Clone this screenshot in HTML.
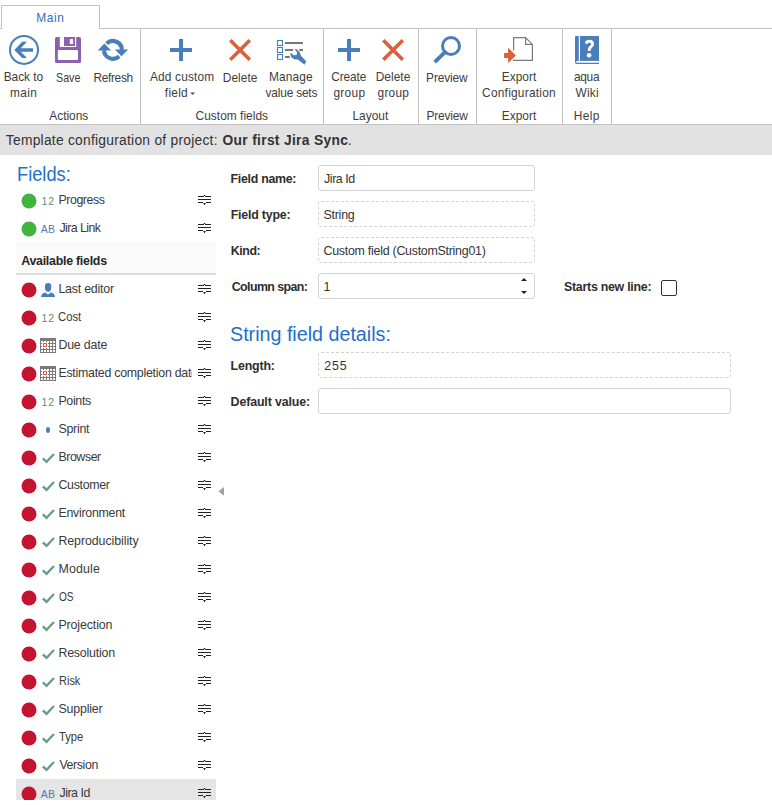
<!DOCTYPE html>
<html><head><meta charset="utf-8"><style>
html,body{margin:0;padding:0;}
body{width:772px;height:805px;overflow:hidden;background:#fff;position:relative;font-family:"Liberation Sans",sans-serif;}
.t{position:absolute;white-space:nowrap;line-height:1;}
</style></head><body>
<div style="position:absolute;left:0px;top:28px;width:772px;height:1px;background:#c2c2c2;"></div>
<div style="position:absolute;left:1px;top:5px;width:99px;height:24px;background:#fff;box-sizing:border-box;border:1px solid #c2c2c2;border-bottom:none;"></div>
<div style="position:absolute;left:140px;top:29px;width:1px;height:95px;background:#c2c2c2;"></div>
<div style="position:absolute;left:323px;top:29px;width:1px;height:95px;background:#c2c2c2;"></div>
<div style="position:absolute;left:418px;top:29px;width:1px;height:95px;background:#c2c2c2;"></div>
<div style="position:absolute;left:476px;top:29px;width:1px;height:95px;background:#c2c2c2;"></div>
<div style="position:absolute;left:562px;top:29px;width:1px;height:95px;background:#c2c2c2;"></div>
<div style="position:absolute;left:611px;top:29px;width:1px;height:95px;background:#c2c2c2;"></div>
<div style="position:absolute;left:0px;top:124px;width:772px;height:1px;background:#c2c2c2;"></div>
<div style="position:absolute;left:0px;top:125px;width:772px;height:30px;background:#e2e2e2;"></div>
<svg style="position:absolute;left:0;top:0" width="772" height="124" viewBox="0 0 772 124">
<!-- back -->
<circle cx="24" cy="49.9" r="14" fill="none" stroke="#4a7ebb" stroke-width="2"/>
<polygon fill="#4a7ebb" points="14.3,50 22.2,41.8 27,41.8 20.8,48.3 33,48.3 33,51.7 20.8,51.7 27,58 22.2,58"/>
<!-- save -->
<path fill="#8c60ae" fill-rule="evenodd" d="M56.5,37 H59.8 V47 H76.2 V37 H79.5 Q81,37 81,38.5 V61.5 Q81,63 79.5,63 H56.5 Q55,63 55,61.5 V38.5 Q55,37 56.5,37 Z M58.8,50 Q57.8,50 57.8,51 V59 Q57.8,60 58.8,60 H77 Q78,60 78,59 V51 Q78,50 77,50 Z"/>
<path fill="#8c60ae" fill-rule="evenodd" d="M64,37 H75 V46 H64 Z M69.8,39 V44 H73.1 V39 Z"/>
<!-- refresh -->
<path fill="none" stroke="#4a7ebb" stroke-width="4.1" d="M106.61,43.61 A8.9,8.9 0 0 1 121.79,50.21"/>
<polygon fill="#4a7ebb" points="114.8,49.4 128.2,49.4 121.5,56.3"/>
<path fill="none" stroke="#4a7ebb" stroke-width="4.1" d="M104.01,50.21 A8.9,8.9 0 0 0 119.19,56.19"/>
<polygon fill="#4a7ebb" points="97.7,50.5 111.1,50.5 104.4,43.6"/>
<!-- add custom field plus -->
<rect x="179" y="39" width="4" height="22" fill="#4a7ebb"/>
<rect x="170" y="48" width="22" height="4" fill="#4a7ebb"/>
<!-- delete X -->
<path stroke="#d9603b" stroke-width="3.6" d="M230.3,40.2 L249.8,59.8 M249.8,40.2 L230.3,59.8"/>
<!-- manage value sets -->
<g fill="none" stroke="#4a7ebb" stroke-width="1.1">
<rect x="277.5" y="40.5" width="5" height="5"/><rect x="277.5" y="47.5" width="5" height="5"/><rect x="277.5" y="54.5" width="5" height="5"/>
</g>
<g fill="#777"><rect x="285" y="42" width="18" height="2"/><rect x="285" y="49" width="8" height="2"/><rect x="299.3" y="49" width="3.7" height="2"/><rect x="285" y="56" width="4.8" height="2"/></g>
<path fill="#4a7ebb" d="M294.4,49 L296.8,49.2 L299.7,52.2 L300.9,55.8 L306.2,61.2 L304.6,64.8 L297.6,59.6 L294.2,59.2 L291.5,57.5 L290.1,53.4 L291,53 L293.5,55.2 L296.6,55 L297.2,52.4 Z"/>
<!-- create group plus -->
<rect x="347" y="39" width="4" height="22" fill="#4a7ebb"/>
<rect x="338" y="48" width="22" height="4" fill="#4a7ebb"/>
<!-- delete group X -->
<path stroke="#d9603b" stroke-width="3.6" d="M383.3,40.2 L402.8,59.8 M402.8,40.2 L383.3,59.8"/>
<!-- preview -->
<circle cx="451" cy="46" r="8.5" fill="none" stroke="#4a7ebb" stroke-width="3"/>
<path stroke="#4a7ebb" stroke-width="3.8" d="M446.3,50.8 L434.7,62.1"/>
<!-- export -->
<path fill="none" stroke="#7a7a7a" stroke-width="1.2" d="M513.6,50.6 V37.6 H525.6 L532.4,44.4 V60.3 H513.6 V59.5 M525.6,37.6 V44.4 H532.4"/>
<polygon fill="#d9603b" points="504.1,53 508.1,53 508.1,47.8 515.9,55.5 508.1,63.1 508.1,57.9 504.1,57.9"/>
<!-- help book -->
<path fill="#4a7ebb" d="M576,36 H578.8 V60.9 H577 Q576.2,60.9 576.2,61.8 Q576.2,62.8 577,62.8 H599 V64 H576.8 Q575,64 575,62 V37 Q575,36 576,36 Z"/>
<rect x="580" y="36" width="19" height="24.9" fill="#4a7ebb"/>
<path fill="none" stroke="#fff" stroke-width="2.9" d="M586.2,43.6 Q586.9,41.3 589.4,41.3 Q592.5,41.3 592.5,44 Q592.5,45.7 590.7,47 Q589.1,48.2 589.1,51"/>
<circle cx="589.1" cy="55.2" r="2.3" fill="#fff"/>
<!-- dropdown arrow -->
<polygon fill="#555" points="190.2,92.6 195.1,92.6 192.65,95"/>
</svg>
<div style="position:absolute;left:16px;top:242px;width:200px;height:31px;background:#fafafa;"></div>
<div style="position:absolute;left:16px;top:273px;width:200px;height:2px;background:#dcdcdc;"></div>
<div style="position:absolute;left:16px;top:779px;width:200px;height:21px;background:#e5e5e5;"></div>
<svg style="position:absolute;left:0;top:0" width="230" height="800" viewBox="0 0 230 800">
<circle cx="29" cy="201" r="7.5" fill="#3fb53f"/>
<g fill="#222"><rect x="198" y="196" width="6" height="1"/><rect x="204" y="195" width="1" height="1"/><rect x="205" y="196" width="6" height="1"/><rect x="198" y="199" width="13" height="1"/><rect x="198" y="202" width="5" height="1"/><rect x="203" y="203" width="1" height="1" opacity="0.6"/><rect x="204" y="203" width="1" height="2"/><rect x="205" y="203" width="1" height="1" opacity="0.6"/><rect x="206" y="202" width="5" height="1"/><rect x="203" y="195" width="1" height="1" opacity="0.3"/><rect x="205" y="195" width="1" height="1" opacity="0.3"/></g>
<circle cx="29" cy="229" r="7.5" fill="#3fb53f"/>
<g fill="#222"><rect x="198" y="224" width="6" height="1"/><rect x="204" y="223" width="1" height="1"/><rect x="205" y="224" width="6" height="1"/><rect x="198" y="227" width="13" height="1"/><rect x="198" y="230" width="5" height="1"/><rect x="203" y="231" width="1" height="1" opacity="0.6"/><rect x="204" y="231" width="1" height="2"/><rect x="205" y="231" width="1" height="1" opacity="0.6"/><rect x="206" y="230" width="5" height="1"/><rect x="203" y="223" width="1" height="1" opacity="0.3"/><rect x="205" y="223" width="1" height="1" opacity="0.3"/></g>
<circle cx="29" cy="290" r="7.5" fill="#c31430"/>
<g fill="#222"><rect x="198" y="285" width="6" height="1"/><rect x="204" y="284" width="1" height="1"/><rect x="205" y="285" width="6" height="1"/><rect x="198" y="288" width="13" height="1"/><rect x="198" y="291" width="5" height="1"/><rect x="203" y="292" width="1" height="1" opacity="0.6"/><rect x="204" y="292" width="1" height="2"/><rect x="205" y="292" width="1" height="1" opacity="0.6"/><rect x="206" y="291" width="5" height="1"/><rect x="203" y="284" width="1" height="1" opacity="0.3"/><rect x="205" y="284" width="1" height="1" opacity="0.3"/></g>
<path fill="#4a7ebb" d="M45,285.7 Q45,283 48.1,283 Q51.2,283 51.2,285.7 V287.8 Q51.2,291.8 48.1,291.8 Q45,291.8 45,287.8 Z"/>
<path fill="#4a7ebb" d="M41,297 Q41.3,293.2 45.3,292.4 L48.1,294.4 L50.9,292.4 Q54.7,293.2 55,297 Z"/>
<circle cx="29" cy="318" r="7.5" fill="#c31430"/>
<g fill="#222"><rect x="198" y="313" width="6" height="1"/><rect x="204" y="312" width="1" height="1"/><rect x="205" y="313" width="6" height="1"/><rect x="198" y="316" width="13" height="1"/><rect x="198" y="319" width="5" height="1"/><rect x="203" y="320" width="1" height="1" opacity="0.6"/><rect x="204" y="320" width="1" height="2"/><rect x="205" y="320" width="1" height="1" opacity="0.6"/><rect x="206" y="319" width="5" height="1"/><rect x="203" y="312" width="1" height="1" opacity="0.3"/><rect x="205" y="312" width="1" height="1" opacity="0.3"/></g>
<circle cx="29" cy="346" r="7.5" fill="#c31430"/>
<g fill="#222"><rect x="198" y="341" width="6" height="1"/><rect x="204" y="340" width="1" height="1"/><rect x="205" y="341" width="6" height="1"/><rect x="198" y="344" width="13" height="1"/><rect x="198" y="347" width="5" height="1"/><rect x="203" y="348" width="1" height="1" opacity="0.6"/><rect x="204" y="348" width="1" height="2"/><rect x="205" y="348" width="1" height="1" opacity="0.6"/><rect x="206" y="347" width="5" height="1"/><rect x="203" y="340" width="1" height="1" opacity="0.3"/><rect x="205" y="340" width="1" height="1" opacity="0.3"/></g>
<rect x="40" y="338" width="16" height="15" fill="#7a7a7a"/>
<rect x="41" y="341" width="2" height="2" fill="#fff"/>
<rect x="44" y="341" width="2" height="2" fill="#fff"/>
<rect x="47" y="341" width="2" height="2" fill="#fff"/>
<rect x="50" y="341" width="2" height="2" fill="#fff"/>
<rect x="53" y="341" width="2" height="2" fill="#fff"/>
<rect x="41" y="344" width="2" height="2" fill="#fff"/>
<rect x="44" y="344" width="2" height="2" fill="#fff"/>
<rect x="47" y="344" width="2" height="2" fill="#fff"/>
<rect x="50" y="344" width="2" height="2" fill="#fff"/>
<rect x="53" y="344" width="2" height="2" fill="#fff"/>
<rect x="41" y="347" width="2" height="2" fill="#fff"/>
<rect x="44" y="347" width="2" height="2" fill="#fff"/>
<rect x="47" y="347" width="2" height="2" fill="#fff"/>
<rect x="50" y="347" width="2" height="2" fill="#fff"/>
<rect x="53" y="347" width="2" height="2" fill="#fff"/>
<rect x="41" y="350" width="2" height="2" fill="#fff"/>
<rect x="44" y="350" width="2" height="2" fill="#fff"/>
<rect x="47" y="350" width="2" height="2" fill="#fff"/>
<rect x="50" y="350" width="2" height="2" fill="#fff"/>
<rect x="53" y="350" width="2" height="2" fill="#fff"/>
<rect x="41" y="341" width="8" height="8" fill="#fff"/>
<g fill="#7a7a7a"><rect x="43" y="341" width="1" height="1"/><rect x="46" y="341" width="1" height="1"/><rect x="43" y="348" width="1" height="1"/><rect x="46" y="348" width="1" height="1"/><rect x="41" y="343" width="1" height="1"/><rect x="41" y="346" width="1" height="1"/><rect x="48" y="343" width="1" height="1"/><rect x="48" y="346" width="1" height="1"/></g>
<rect x="43.5" y="343.5" width="3" height="3" fill="none" stroke="#d9603b" stroke-width="1"/>
<circle cx="29" cy="374" r="7.5" fill="#c31430"/>
<g fill="#222"><rect x="198" y="369" width="6" height="1"/><rect x="204" y="368" width="1" height="1"/><rect x="205" y="369" width="6" height="1"/><rect x="198" y="372" width="13" height="1"/><rect x="198" y="375" width="5" height="1"/><rect x="203" y="376" width="1" height="1" opacity="0.6"/><rect x="204" y="376" width="1" height="2"/><rect x="205" y="376" width="1" height="1" opacity="0.6"/><rect x="206" y="375" width="5" height="1"/><rect x="203" y="368" width="1" height="1" opacity="0.3"/><rect x="205" y="368" width="1" height="1" opacity="0.3"/></g>
<rect x="40" y="366" width="16" height="15" fill="#7a7a7a"/>
<rect x="41" y="369" width="2" height="2" fill="#fff"/>
<rect x="44" y="369" width="2" height="2" fill="#fff"/>
<rect x="47" y="369" width="2" height="2" fill="#fff"/>
<rect x="50" y="369" width="2" height="2" fill="#fff"/>
<rect x="53" y="369" width="2" height="2" fill="#fff"/>
<rect x="41" y="372" width="2" height="2" fill="#fff"/>
<rect x="44" y="372" width="2" height="2" fill="#fff"/>
<rect x="47" y="372" width="2" height="2" fill="#fff"/>
<rect x="50" y="372" width="2" height="2" fill="#fff"/>
<rect x="53" y="372" width="2" height="2" fill="#fff"/>
<rect x="41" y="375" width="2" height="2" fill="#fff"/>
<rect x="44" y="375" width="2" height="2" fill="#fff"/>
<rect x="47" y="375" width="2" height="2" fill="#fff"/>
<rect x="50" y="375" width="2" height="2" fill="#fff"/>
<rect x="53" y="375" width="2" height="2" fill="#fff"/>
<rect x="41" y="378" width="2" height="2" fill="#fff"/>
<rect x="44" y="378" width="2" height="2" fill="#fff"/>
<rect x="47" y="378" width="2" height="2" fill="#fff"/>
<rect x="50" y="378" width="2" height="2" fill="#fff"/>
<rect x="53" y="378" width="2" height="2" fill="#fff"/>
<rect x="41" y="369" width="8" height="8" fill="#fff"/>
<g fill="#7a7a7a"><rect x="43" y="369" width="1" height="1"/><rect x="46" y="369" width="1" height="1"/><rect x="43" y="376" width="1" height="1"/><rect x="46" y="376" width="1" height="1"/><rect x="41" y="371" width="1" height="1"/><rect x="41" y="374" width="1" height="1"/><rect x="48" y="371" width="1" height="1"/><rect x="48" y="374" width="1" height="1"/></g>
<rect x="43.5" y="371.5" width="3" height="3" fill="none" stroke="#d9603b" stroke-width="1"/>
<circle cx="29" cy="402" r="7.5" fill="#c31430"/>
<g fill="#222"><rect x="198" y="397" width="6" height="1"/><rect x="204" y="396" width="1" height="1"/><rect x="205" y="397" width="6" height="1"/><rect x="198" y="400" width="13" height="1"/><rect x="198" y="403" width="5" height="1"/><rect x="203" y="404" width="1" height="1" opacity="0.6"/><rect x="204" y="404" width="1" height="2"/><rect x="205" y="404" width="1" height="1" opacity="0.6"/><rect x="206" y="403" width="5" height="1"/><rect x="203" y="396" width="1" height="1" opacity="0.3"/><rect x="205" y="396" width="1" height="1" opacity="0.3"/></g>
<circle cx="29" cy="430" r="7.5" fill="#c31430"/>
<g fill="#222"><rect x="198" y="425" width="6" height="1"/><rect x="204" y="424" width="1" height="1"/><rect x="205" y="425" width="6" height="1"/><rect x="198" y="428" width="13" height="1"/><rect x="198" y="431" width="5" height="1"/><rect x="203" y="432" width="1" height="1" opacity="0.6"/><rect x="204" y="432" width="1" height="2"/><rect x="205" y="432" width="1" height="1" opacity="0.6"/><rect x="206" y="431" width="5" height="1"/><rect x="203" y="424" width="1" height="1" opacity="0.3"/><rect x="205" y="424" width="1" height="1" opacity="0.3"/></g>
<ellipse cx="48" cy="430" rx="2" ry="3" fill="#4a7ebb"/>
<circle cx="29" cy="458" r="7.5" fill="#c31430"/>
<g fill="#222"><rect x="198" y="453" width="6" height="1"/><rect x="204" y="452" width="1" height="1"/><rect x="205" y="453" width="6" height="1"/><rect x="198" y="456" width="13" height="1"/><rect x="198" y="459" width="5" height="1"/><rect x="203" y="460" width="1" height="1" opacity="0.6"/><rect x="204" y="460" width="1" height="2"/><rect x="205" y="460" width="1" height="1" opacity="0.6"/><rect x="206" y="459" width="5" height="1"/><rect x="203" y="452" width="1" height="1" opacity="0.3"/><rect x="205" y="452" width="1" height="1" opacity="0.3"/></g>
<polyline fill="none" stroke="#6a9e8b" stroke-width="2.4" points="42.9,458.5 46.6,461.9 54.0,454.0"/>
<circle cx="29" cy="486" r="7.5" fill="#c31430"/>
<g fill="#222"><rect x="198" y="481" width="6" height="1"/><rect x="204" y="480" width="1" height="1"/><rect x="205" y="481" width="6" height="1"/><rect x="198" y="484" width="13" height="1"/><rect x="198" y="487" width="5" height="1"/><rect x="203" y="488" width="1" height="1" opacity="0.6"/><rect x="204" y="488" width="1" height="2"/><rect x="205" y="488" width="1" height="1" opacity="0.6"/><rect x="206" y="487" width="5" height="1"/><rect x="203" y="480" width="1" height="1" opacity="0.3"/><rect x="205" y="480" width="1" height="1" opacity="0.3"/></g>
<polyline fill="none" stroke="#6a9e8b" stroke-width="2.4" points="42.9,486.5 46.6,489.9 54.0,482.0"/>
<circle cx="29" cy="514" r="7.5" fill="#c31430"/>
<g fill="#222"><rect x="198" y="509" width="6" height="1"/><rect x="204" y="508" width="1" height="1"/><rect x="205" y="509" width="6" height="1"/><rect x="198" y="512" width="13" height="1"/><rect x="198" y="515" width="5" height="1"/><rect x="203" y="516" width="1" height="1" opacity="0.6"/><rect x="204" y="516" width="1" height="2"/><rect x="205" y="516" width="1" height="1" opacity="0.6"/><rect x="206" y="515" width="5" height="1"/><rect x="203" y="508" width="1" height="1" opacity="0.3"/><rect x="205" y="508" width="1" height="1" opacity="0.3"/></g>
<polyline fill="none" stroke="#6a9e8b" stroke-width="2.4" points="42.9,514.5 46.6,517.9 54.0,510.0"/>
<circle cx="29" cy="542" r="7.5" fill="#c31430"/>
<g fill="#222"><rect x="198" y="537" width="6" height="1"/><rect x="204" y="536" width="1" height="1"/><rect x="205" y="537" width="6" height="1"/><rect x="198" y="540" width="13" height="1"/><rect x="198" y="543" width="5" height="1"/><rect x="203" y="544" width="1" height="1" opacity="0.6"/><rect x="204" y="544" width="1" height="2"/><rect x="205" y="544" width="1" height="1" opacity="0.6"/><rect x="206" y="543" width="5" height="1"/><rect x="203" y="536" width="1" height="1" opacity="0.3"/><rect x="205" y="536" width="1" height="1" opacity="0.3"/></g>
<polyline fill="none" stroke="#6a9e8b" stroke-width="2.4" points="42.9,542.5 46.6,545.9 54.0,538.0"/>
<circle cx="29" cy="570" r="7.5" fill="#c31430"/>
<g fill="#222"><rect x="198" y="565" width="6" height="1"/><rect x="204" y="564" width="1" height="1"/><rect x="205" y="565" width="6" height="1"/><rect x="198" y="568" width="13" height="1"/><rect x="198" y="571" width="5" height="1"/><rect x="203" y="572" width="1" height="1" opacity="0.6"/><rect x="204" y="572" width="1" height="2"/><rect x="205" y="572" width="1" height="1" opacity="0.6"/><rect x="206" y="571" width="5" height="1"/><rect x="203" y="564" width="1" height="1" opacity="0.3"/><rect x="205" y="564" width="1" height="1" opacity="0.3"/></g>
<polyline fill="none" stroke="#6a9e8b" stroke-width="2.4" points="42.9,570.5 46.6,573.9 54.0,566.0"/>
<circle cx="29" cy="598" r="7.5" fill="#c31430"/>
<g fill="#222"><rect x="198" y="593" width="6" height="1"/><rect x="204" y="592" width="1" height="1"/><rect x="205" y="593" width="6" height="1"/><rect x="198" y="596" width="13" height="1"/><rect x="198" y="599" width="5" height="1"/><rect x="203" y="600" width="1" height="1" opacity="0.6"/><rect x="204" y="600" width="1" height="2"/><rect x="205" y="600" width="1" height="1" opacity="0.6"/><rect x="206" y="599" width="5" height="1"/><rect x="203" y="592" width="1" height="1" opacity="0.3"/><rect x="205" y="592" width="1" height="1" opacity="0.3"/></g>
<polyline fill="none" stroke="#6a9e8b" stroke-width="2.4" points="42.9,598.5 46.6,601.9 54.0,594.0"/>
<circle cx="29" cy="626" r="7.5" fill="#c31430"/>
<g fill="#222"><rect x="198" y="621" width="6" height="1"/><rect x="204" y="620" width="1" height="1"/><rect x="205" y="621" width="6" height="1"/><rect x="198" y="624" width="13" height="1"/><rect x="198" y="627" width="5" height="1"/><rect x="203" y="628" width="1" height="1" opacity="0.6"/><rect x="204" y="628" width="1" height="2"/><rect x="205" y="628" width="1" height="1" opacity="0.6"/><rect x="206" y="627" width="5" height="1"/><rect x="203" y="620" width="1" height="1" opacity="0.3"/><rect x="205" y="620" width="1" height="1" opacity="0.3"/></g>
<polyline fill="none" stroke="#6a9e8b" stroke-width="2.4" points="42.9,626.5 46.6,629.9 54.0,622.0"/>
<circle cx="29" cy="654" r="7.5" fill="#c31430"/>
<g fill="#222"><rect x="198" y="649" width="6" height="1"/><rect x="204" y="648" width="1" height="1"/><rect x="205" y="649" width="6" height="1"/><rect x="198" y="652" width="13" height="1"/><rect x="198" y="655" width="5" height="1"/><rect x="203" y="656" width="1" height="1" opacity="0.6"/><rect x="204" y="656" width="1" height="2"/><rect x="205" y="656" width="1" height="1" opacity="0.6"/><rect x="206" y="655" width="5" height="1"/><rect x="203" y="648" width="1" height="1" opacity="0.3"/><rect x="205" y="648" width="1" height="1" opacity="0.3"/></g>
<polyline fill="none" stroke="#6a9e8b" stroke-width="2.4" points="42.9,654.5 46.6,657.9 54.0,650.0"/>
<circle cx="29" cy="682" r="7.5" fill="#c31430"/>
<g fill="#222"><rect x="198" y="677" width="6" height="1"/><rect x="204" y="676" width="1" height="1"/><rect x="205" y="677" width="6" height="1"/><rect x="198" y="680" width="13" height="1"/><rect x="198" y="683" width="5" height="1"/><rect x="203" y="684" width="1" height="1" opacity="0.6"/><rect x="204" y="684" width="1" height="2"/><rect x="205" y="684" width="1" height="1" opacity="0.6"/><rect x="206" y="683" width="5" height="1"/><rect x="203" y="676" width="1" height="1" opacity="0.3"/><rect x="205" y="676" width="1" height="1" opacity="0.3"/></g>
<polyline fill="none" stroke="#6a9e8b" stroke-width="2.4" points="42.9,682.5 46.6,685.9 54.0,678.0"/>
<circle cx="29" cy="710" r="7.5" fill="#c31430"/>
<g fill="#222"><rect x="198" y="705" width="6" height="1"/><rect x="204" y="704" width="1" height="1"/><rect x="205" y="705" width="6" height="1"/><rect x="198" y="708" width="13" height="1"/><rect x="198" y="711" width="5" height="1"/><rect x="203" y="712" width="1" height="1" opacity="0.6"/><rect x="204" y="712" width="1" height="2"/><rect x="205" y="712" width="1" height="1" opacity="0.6"/><rect x="206" y="711" width="5" height="1"/><rect x="203" y="704" width="1" height="1" opacity="0.3"/><rect x="205" y="704" width="1" height="1" opacity="0.3"/></g>
<polyline fill="none" stroke="#6a9e8b" stroke-width="2.4" points="42.9,710.5 46.6,713.9 54.0,706.0"/>
<circle cx="29" cy="738" r="7.5" fill="#c31430"/>
<g fill="#222"><rect x="198" y="733" width="6" height="1"/><rect x="204" y="732" width="1" height="1"/><rect x="205" y="733" width="6" height="1"/><rect x="198" y="736" width="13" height="1"/><rect x="198" y="739" width="5" height="1"/><rect x="203" y="740" width="1" height="1" opacity="0.6"/><rect x="204" y="740" width="1" height="2"/><rect x="205" y="740" width="1" height="1" opacity="0.6"/><rect x="206" y="739" width="5" height="1"/><rect x="203" y="732" width="1" height="1" opacity="0.3"/><rect x="205" y="732" width="1" height="1" opacity="0.3"/></g>
<polyline fill="none" stroke="#6a9e8b" stroke-width="2.4" points="42.9,738.5 46.6,741.9 54.0,734.0"/>
<circle cx="29" cy="766" r="7.5" fill="#c31430"/>
<g fill="#222"><rect x="198" y="761" width="6" height="1"/><rect x="204" y="760" width="1" height="1"/><rect x="205" y="761" width="6" height="1"/><rect x="198" y="764" width="13" height="1"/><rect x="198" y="767" width="5" height="1"/><rect x="203" y="768" width="1" height="1" opacity="0.6"/><rect x="204" y="768" width="1" height="2"/><rect x="205" y="768" width="1" height="1" opacity="0.6"/><rect x="206" y="767" width="5" height="1"/><rect x="203" y="760" width="1" height="1" opacity="0.3"/><rect x="205" y="760" width="1" height="1" opacity="0.3"/></g>
<polyline fill="none" stroke="#6a9e8b" stroke-width="2.4" points="42.9,766.5 46.6,769.9 54.0,762.0"/>
<circle cx="29" cy="794" r="7.5" fill="#c31430"/>
<g fill="#222"><rect x="198" y="789" width="6" height="1"/><rect x="204" y="788" width="1" height="1"/><rect x="205" y="789" width="6" height="1"/><rect x="198" y="792" width="13" height="1"/><rect x="198" y="795" width="5" height="1"/><rect x="203" y="796" width="1" height="1" opacity="0.6"/><rect x="204" y="796" width="1" height="2"/><rect x="205" y="796" width="1" height="1" opacity="0.6"/><rect x="206" y="795" width="5" height="1"/><rect x="203" y="788" width="1" height="1" opacity="0.3"/><rect x="205" y="788" width="1" height="1" opacity="0.3"/></g>
</svg>
<div class="t" style="left:41.5px;top:195.5px;font-size:10.5px;line-height:10px;color:#5a8f7d;letter-spacing:0.8px;font-family:'Liberation Sans',sans-serif">12</div>
<div class="t" style="left:40.8px;top:224px;font-size:10.5px;line-height:10px;color:#4a7ebb;letter-spacing:0.3px">AB</div>
<div class="t" style="left:41.5px;top:312.5px;font-size:10.5px;line-height:10px;color:#5a8f7d;letter-spacing:0.8px;font-family:'Liberation Sans',sans-serif">12</div>
<div class="t" style="left:41.5px;top:396.5px;font-size:10.5px;line-height:10px;color:#5a8f7d;letter-spacing:0.8px;font-family:'Liberation Sans',sans-serif">12</div>
<div class="t" style="left:40.8px;top:789px;font-size:10.5px;line-height:10px;color:#4a7ebb;letter-spacing:0.3px">AB</div>
<svg style="position:absolute;left:216px;top:484px" width="10" height="14"><polygon points="2.4,7.3 8,2.9 8,11.8" fill="#a0a0a8"/></svg>
<div style="position:absolute;left:318px;top:165px;width:217px;height:26px;box-sizing:border-box;border:1px solid #d4d4d4;border-radius:3px;background:#fff"></div>
<div style="position:absolute;left:318px;top:201px;width:217px;height:26px;box-sizing:border-box;border:1px dashed #d2d2d2;border-radius:3px;background:#fff"></div>
<div style="position:absolute;left:318px;top:237px;width:217px;height:26px;box-sizing:border-box;border:1px dashed #d2d2d2;border-radius:3px;background:#fff"></div>
<div style="position:absolute;left:318px;top:273px;width:217px;height:26px;box-sizing:border-box;border:1px solid #d4d4d4;border-radius:3px;background:#fff"></div>
<div style="position:absolute;left:318px;top:352px;width:413px;height:26px;box-sizing:border-box;border:1px dashed #d2d2d2;border-radius:3px;background:#fff"></div>
<div style="position:absolute;left:318px;top:388px;width:413px;height:26px;box-sizing:border-box;border:1px solid #d4d4d4;border-radius:3px;background:#fff"></div>
<svg style="position:absolute;left:518px;top:274px" width="14" height="24"><polygon points="3,7 9,7 6,4" fill="#222"/><polygon points="3,17 9,17 6,20" fill="#222"/></svg>
<div style="position:absolute;left:661px;top:280px;width:16px;height:16px;box-sizing:border-box;border:1px solid #333;border-radius:2px;background:#fff"></div>
<div class="t" style="left:36.30px;top:12.73px;font-size:11.9px;color:#2f6fbf;letter-spacing:0.633px;">Main</div>
<div class="t" style="left:3.70px;top:71.83px;font-size:11.9px;color:#3d3d3d;letter-spacing:-0.033px;">Back to</div>
<div class="t" style="left:10.10px;top:88.23px;font-size:11.9px;color:#3d3d3d;letter-spacing:0.333px;">main</div>
<div class="t" style="left:55.60px;top:72.83px;font-size:11.9px;color:#3d3d3d;transform:scaleX(0.9000);transform-origin:0 0;">Save</div>
<div class="t" style="left:93.40px;top:72.83px;font-size:11.9px;color:#3d3d3d;letter-spacing:-0.317px;">Refresh</div>
<div class="t" style="left:149.90px;top:71.83px;font-size:11.9px;color:#3d3d3d;letter-spacing:0.167px;">Add custom</div>
<div class="t" style="left:164.80px;top:88.23px;font-size:11.9px;color:#3d3d3d;letter-spacing:0.275px;">field</div>
<div class="t" style="left:222.80px;top:72.83px;font-size:11.9px;color:#3d3d3d;letter-spacing:0.040px;">Delete</div>
<div class="t" style="left:268.90px;top:71.83px;font-size:11.9px;color:#3d3d3d;letter-spacing:0.140px;">Manage</div>
<div class="t" style="left:265.60px;top:88.23px;font-size:11.9px;color:#3d3d3d;letter-spacing:-0.189px;">value sets</div>
<div class="t" style="left:331.20px;top:71.83px;font-size:11.9px;color:#3d3d3d;letter-spacing:-0.100px;">Create</div>
<div class="t" style="left:333.40px;top:88.23px;font-size:11.9px;color:#3d3d3d;letter-spacing:0.325px;">group</div>
<div class="t" style="left:375.70px;top:71.83px;font-size:11.9px;color:#3d3d3d;letter-spacing:0.040px;">Delete</div>
<div class="t" style="left:377.60px;top:88.23px;font-size:11.9px;color:#3d3d3d;letter-spacing:0.225px;">group</div>
<div class="t" style="left:426.10px;top:72.83px;font-size:11.9px;color:#3d3d3d;letter-spacing:-0.117px;">Preview</div>
<div class="t" style="left:501.70px;top:71.83px;font-size:11.9px;color:#3d3d3d;letter-spacing:0.040px;">Export</div>
<div class="t" style="left:482.10px;top:88.23px;font-size:11.9px;color:#3d3d3d;letter-spacing:0.233px;">Configuration</div>
<div class="t" style="left:573.90px;top:71.83px;font-size:11.9px;color:#3d3d3d;letter-spacing:-0.267px;">aqua</div>
<div class="t" style="left:575.60px;top:88.23px;font-size:11.9px;color:#3d3d3d;letter-spacing:0.167px;">Wiki</div>
<div class="t" style="left:49.30px;top:110.68px;font-size:11.9px;color:#3d3d3d;letter-spacing:-0.017px;">Actions</div>
<div class="t" style="left:195.60px;top:110.68px;font-size:11.9px;color:#3d3d3d;letter-spacing:0.033px;">Custom fields</div>
<div class="t" style="left:352.50px;top:110.68px;font-size:11.9px;color:#3d3d3d;">Layout</div>
<div class="t" style="left:426.40px;top:110.68px;font-size:11.9px;color:#3d3d3d;letter-spacing:-0.150px;">Preview</div>
<div class="t" style="left:501.70px;top:110.68px;font-size:11.9px;color:#3d3d3d;letter-spacing:0.040px;">Export</div>
<div class="t" style="left:573.70px;top:110.68px;font-size:11.9px;color:#3d3d3d;letter-spacing:0.433px;">Help</div>
<div class="t" style="left:5.80px;top:134.02px;font-size:13.8px;color:#333;letter-spacing:0.258px;">Template configuration of project:</div>
<div class="t" style="left:222.50px;top:134.02px;font-size:13.8px;color:#333;letter-spacing:0.317px;font-weight:700;">Our first Jira Sync</div>
<div class="t" style="left:347.80px;top:134.02px;font-size:13.8px;color:#333;">.</div>
<div class="t" style="left:16.56px;top:165.19px;font-size:19.5px;color:#1f70c6;transform:scaleX(0.9364);transform-origin:0 0;">Fields:</div>
<div class="t" style="left:58.40px;top:193.90px;font-size:12.4px;color:#3a3a3a;letter-spacing:-0.429px;">Progress</div>
<div class="t" style="left:59.40px;top:221.90px;font-size:12.4px;color:#3a3a3a;letter-spacing:-0.575px;">Jira Link</div>
<div class="t" style="left:21.20px;top:254.50px;font-size:12.4px;color:#262626;letter-spacing:-0.260px;font-weight:700;">Available fields</div>
<div class="t" style="left:58.40px;top:283.10px;font-size:12.4px;color:#3a3a3a;letter-spacing:-0.220px;">Last editor</div>
<div class="t" style="left:58.49px;top:311.10px;font-size:12.4px;color:#3a3a3a;transform:scaleX(0.9120);transform-origin:0 0;">Cost</div>
<div class="t" style="left:58.40px;top:339.10px;font-size:12.4px;color:#3a3a3a;letter-spacing:-0.186px;">Due date</div>
<div class="t" style="left:58.40px;top:367.10px;font-size:12.4px;color:#3a3a3a;letter-spacing:-0.267px;width:134.1px;overflow:hidden;">Estimated completion date</div>
<div class="t" style="left:58.40px;top:395.10px;font-size:12.4px;color:#3a3a3a;letter-spacing:-0.320px;">Points</div>
<div class="t" style="left:58.40px;top:423.10px;font-size:12.4px;color:#3a3a3a;letter-spacing:-0.240px;">Sprint</div>
<div class="t" style="left:58.40px;top:451.10px;font-size:12.4px;color:#3a3a3a;letter-spacing:-0.433px;">Browser</div>
<div class="t" style="left:58.40px;top:479.10px;font-size:12.4px;color:#3a3a3a;letter-spacing:-0.300px;">Customer</div>
<div class="t" style="left:58.40px;top:507.10px;font-size:12.4px;color:#3a3a3a;letter-spacing:-0.270px;">Environment</div>
<div class="t" style="left:58.40px;top:535.10px;font-size:12.4px;color:#3a3a3a;letter-spacing:-0.071px;">Reproducibility</div>
<div class="t" style="left:58.40px;top:563.10px;font-size:12.4px;color:#3a3a3a;letter-spacing:0.180px;">Module</div>
<div class="t" style="left:59.40px;top:591.10px;font-size:12.4px;color:#3a3a3a;transform:scaleX(0.8111);transform-origin:0 0;">OS</div>
<div class="t" style="left:58.40px;top:619.10px;font-size:12.4px;color:#3a3a3a;letter-spacing:-0.111px;">Projection</div>
<div class="t" style="left:58.40px;top:647.10px;font-size:12.4px;color:#3a3a3a;letter-spacing:-0.211px;">Resolution</div>
<div class="t" style="left:58.51px;top:675.10px;font-size:12.4px;color:#3a3a3a;transform:scaleX(0.8870);transform-origin:0 0;">Risk</div>
<div class="t" style="left:58.40px;top:703.10px;font-size:12.4px;color:#3a3a3a;letter-spacing:-0.171px;">Supplier</div>
<div class="t" style="left:59.40px;top:731.10px;font-size:12.4px;color:#3a3a3a;transform:scaleX(0.9037);transform-origin:0 0;">Type</div>
<div class="t" style="left:59.40px;top:759.10px;font-size:12.4px;color:#3a3a3a;letter-spacing:-0.400px;">Version</div>
<div class="t" style="left:59.40px;top:787.10px;font-size:12.4px;color:#3a3a3a;letter-spacing:-0.450px;">Jira Id</div>
<div class="t" style="left:230.60px;top:172.50px;font-size:12.4px;color:#2e2e2e;letter-spacing:-0.300px;font-weight:700;">Field name:</div>
<div class="t" style="left:230.70px;top:208.50px;font-size:12.4px;color:#2e2e2e;letter-spacing:-0.210px;font-weight:700;">Field type:</div>
<div class="t" style="left:230.70px;top:244.50px;font-size:12.4px;color:#2e2e2e;letter-spacing:-0.400px;font-weight:700;">Kind:</div>
<div class="t" style="left:231.70px;top:280.50px;font-size:12.4px;color:#2e2e2e;letter-spacing:-0.573px;font-weight:700;">Column span:</div>
<div class="t" style="left:564.00px;top:280.50px;font-size:12.4px;color:#2e2e2e;letter-spacing:-0.267px;font-weight:700;">Starts new line:</div>
<div class="t" style="left:230.49px;top:325.09px;font-size:19.5px;color:#1f70c6;transform:scaleX(1.0096);transform-origin:0 0;">String field details:</div>
<div class="t" style="left:230.60px;top:360.40px;font-size:12.4px;color:#2e2e2e;letter-spacing:-0.183px;font-weight:700;">Length:</div>
<div class="t" style="left:230.60px;top:396.10px;font-size:12.4px;color:#2e2e2e;letter-spacing:-0.131px;font-weight:700;">Default value:</div>
<div class="t" style="left:324.10px;top:172.50px;font-size:12.4px;color:#333;letter-spacing:-0.450px;">Jira Id</div>
<div class="t" style="left:323.40px;top:208.50px;font-size:12.4px;color:#333;letter-spacing:-0.200px;">String</div>
<div class="t" style="left:323.50px;top:244.50px;font-size:12.4px;color:#333;letter-spacing:-0.254px;">Custom field (CustomString01)</div>
<div class="t" style="left:323.60px;top:280.50px;font-size:12.4px;color:#333;">1</div>
<div class="t" style="left:324.30px;top:360.40px;font-size:12.4px;color:#333;letter-spacing:0.850px;">255</div>
</body></html>
